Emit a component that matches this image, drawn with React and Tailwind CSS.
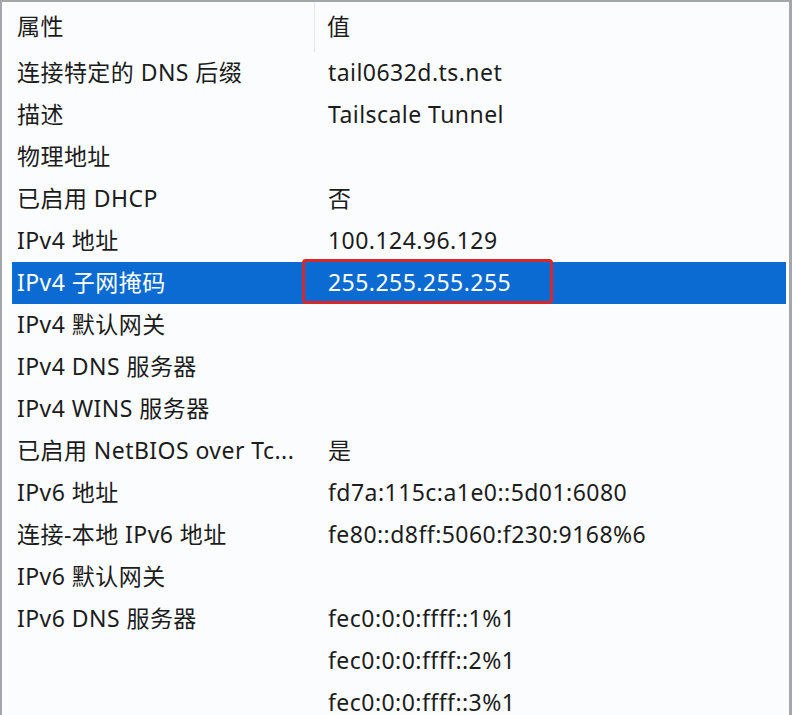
import React from "react";

const rows = [
  ["连接特定的 DNS 后缀", "tail0632d.ts.net"],
  ["描述", "Tailscale Tunnel"],
  ["物理地址", ""],
  ["已启用 DHCP", "否"],
  ["IPv4 地址", "100.124.96.129"],
  ["IPv4 子网掩码", "255.255.255.255", true],
  ["IPv4 默认网关", ""],
  ["IPv4 DNS 服务器", ""],
  ["IPv4 WINS 服务器", ""],
  ["已启用 NetBIOS over Tc...", "是"],
  ["IPv6 地址", "fd7a:115c:a1e0::5d01:6080"],
  ["连接-本地 IPv6 地址", "fe80::d8ff:5060:f230:9168%6"],
  ["IPv6 默认网关", ""],
  ["IPv6 DNS 服务器", "fec0:0:0:ffff::1%1"],
  ["", "fec0:0:0:ffff::2%1"],
  ["", "fec0:0:0:ffff::3%1"],
];

export default function App() {
  return (
    <div
      className="w-[792px] h-[715px] overflow-hidden bg-[#fbfcfe] border-l-2 border-t-2 border-r-[3px] border-[#a3a6ab] text-[23px] tracking-[0.45px] text-[#1c1c1c]"
      style={{ fontFamily: '"Noto Sans", "Noto Sans CJK SC", sans-serif' }}
    >
      <div className="flex h-[50px] items-center">
        <div className="w-[313px] h-full flex items-center pl-[15px] pb-[2px] border-r border-[#e3e5e8]">
          属性
        </div>
        <div className="pl-[12px] pb-[2px]">值</div>
      </div>
      <div className="flex flex-col">
        {rows.map(([k, v, sel], i) => (
          <div
            key={i}
            className={
              "relative flex items-center h-[42px] ml-[10px] mr-[3px] pl-[5px] pb-[1px] leading-none " +
              (sel ? "bg-[#0b6bd2] text-white" : "")
            }
          >
            <div className="w-[311px] shrink-0 whitespace-nowrap">{k}</div>
            <div className="whitespace-nowrap">{v}</div>
            {sel && (
              <div className="absolute left-[290px] top-[-3px] w-[251px] h-[45px] border-[3px] border-[#d9262b] rounded-[4px]" />
            )}
          </div>
        ))}
      </div>
    </div>
  );
}
